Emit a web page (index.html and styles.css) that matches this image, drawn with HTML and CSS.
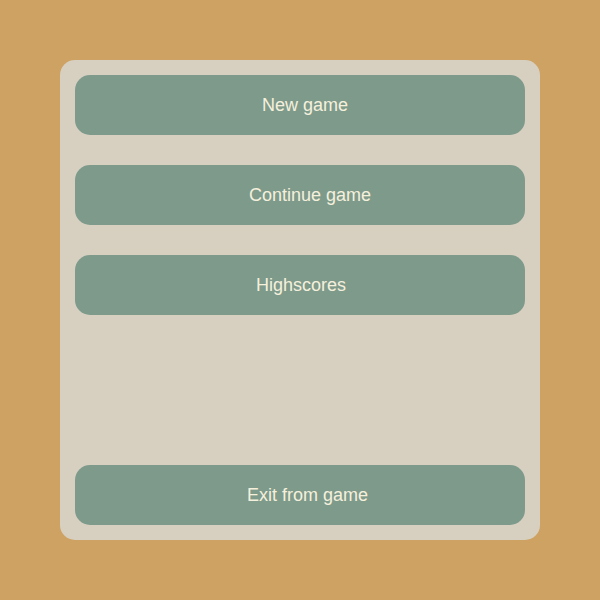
FILE: index.html
```html
<!DOCTYPE html>
<html>
<head>
<meta charset="utf-8">
<link rel="stylesheet" href="styles.css">
</head>
<body>
<div class="menu">
  <button class="btn btn-new">New game</button>
  <button class="btn btn-continue">Continue game</button>
  <button class="btn btn-scores">Highscores</button>
  <button class="btn btn-exit">Exit from game</button>
</div>
</body>
</html>
```
FILE: styles.css
```css
html, body {
  margin: 0;
  padding: 0;
  background: #cea262;
  width: 600px;
  height: 600px;
}
body {
  padding: 60px;
  box-sizing: border-box;
  font-family: "Liberation Sans", Arial, sans-serif;
}
.menu {
  width: 480px;
  height: 480px;
  box-sizing: border-box;
  padding: 15px;
  background: #d7d0c1;
  border-radius: 15px;
  display: flex;
  flex-direction: column;
  gap: 30px;
}
.btn {
  height: 60px;
  flex: none;
  border: none;
  margin: 0;
  background: #7e9a8b;
  color: #f5f0dc;
  border-radius: 15px;
  font-family: "Liberation Sans", Arial, sans-serif;
  font-size: 18px;
  display: flex;
  align-items: center;
  justify-content: center;
  padding: 0;
}
.btn-new { padding-left: 10px; }
.btn-continue { padding-left: 20px; }
.btn-scores { padding-left: 2px; }
.btn-exit { padding-left: 15px; margin-top: auto; }
```
